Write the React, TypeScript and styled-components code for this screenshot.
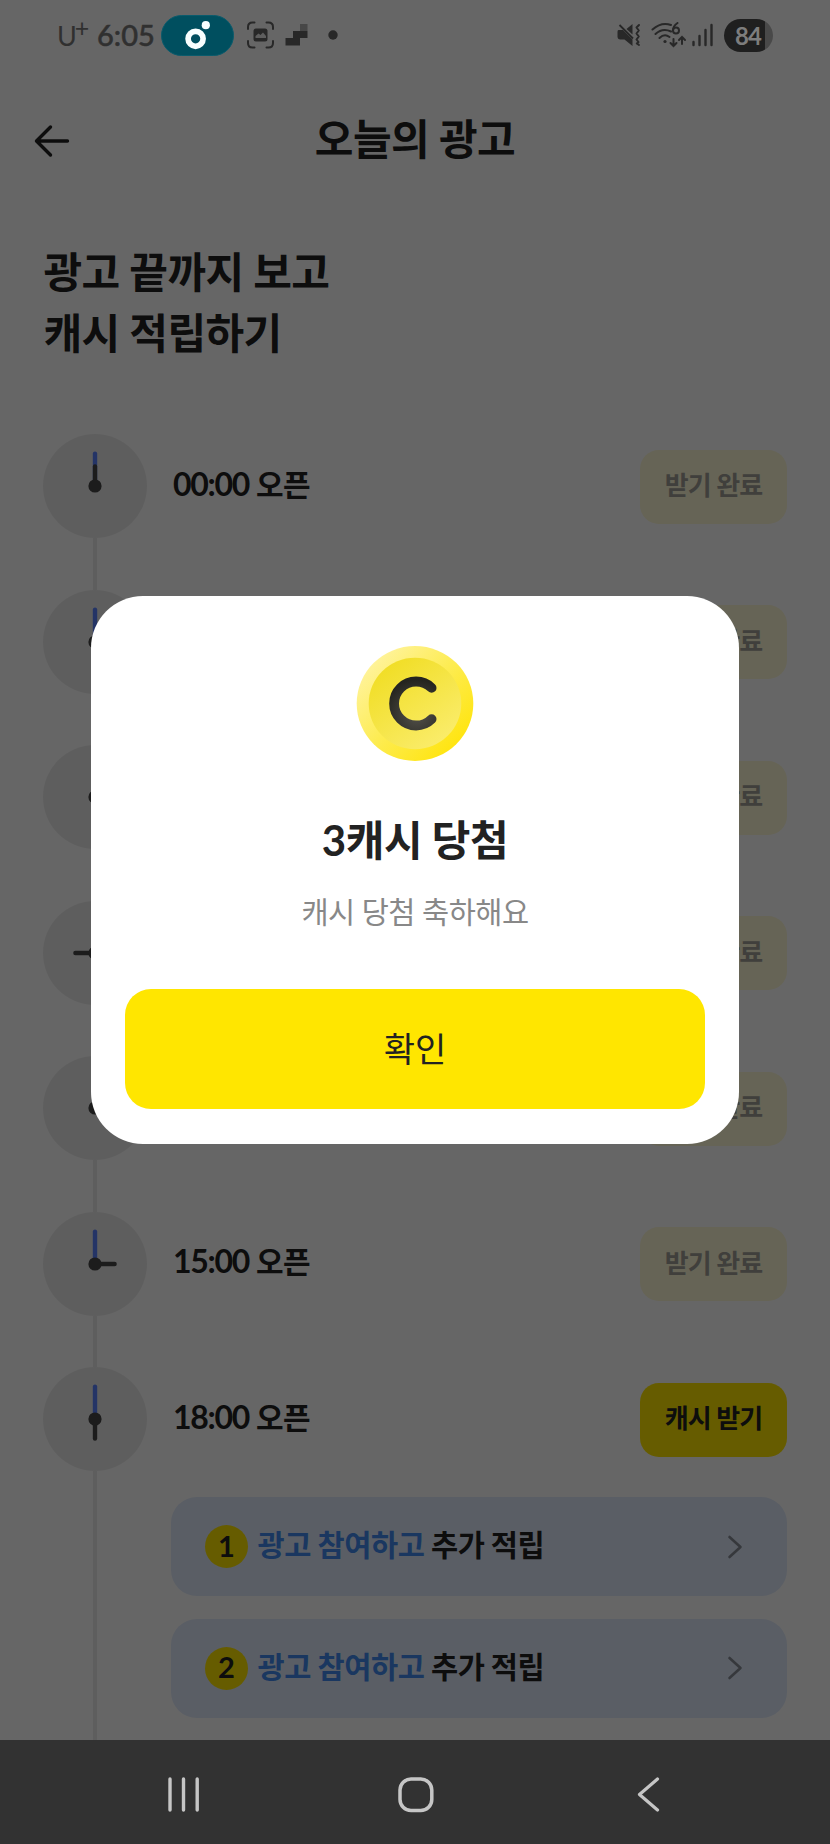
import React from "react";
import styled, { createGlobalStyle } from "styled-components";

const GlobalStyle = createGlobalStyle`
  * { box-sizing: border-box; }
  body { margin: 0; background: #666; }
  button { border: 0; margin: 0; padding: 0; font: inherit; }
`;

const Screen = styled.div`
  position: relative;
  display: flex;
  flex-direction: column;
  width: 830px;
  height: 1844px;
  overflow: hidden;
  background: #fff;
  color: #222;
  font-family: Lato, "Noto Sans CJK KR", sans-serif;
`;

/* ---------- system status bar ---------- */

const StatusBar = styled.div`
  position: relative;
  z-index: 2;
  flex: none;
  display: flex;
  align-items: center;
  justify-content: space-between;
  height: 70px;
  padding: 0 57px;
  color: #303030;
`;

const StatusGroup = styled.div`
  display: flex;
  align-items: center;
`;

const Carrier = styled.span`
  display: flex;
  align-items: flex-start;
  width: 40px;
  padding-top: 2px;
  font: 400 27px/30px Lato, sans-serif;
  sup {
    font-size: 25px;
    line-height: 12px;
    margin-left: -2px;
  }
`;

const Clock = styled.span`
  width: 64px;
  font: 500 29px/30px Lato, sans-serif;
  -webkit-text-stroke: 0.5px #303030;
`;

const NowPill = styled.span`
  display: flex;
  align-items: center;
  justify-content: center;
  width: 73px;
  height: 41px;
  border: 1px solid #0a5b6c;
  border-radius: 21px;
  background: #004f5f;
`;

const StatusIcon = styled.svg<{ $gap: number }>`
  display: block;
  margin-left: ${(p) => p.$gap}px;
`;

const Battery = styled.span`
  display: flex;
  align-items: center;
  justify-content: center;
  width: 49px;
  height: 33px;
  margin-left: 10px;
  padding-right: 1px;
  border-radius: 17px;
  background: linear-gradient(90deg, #1f1f1f 41px, #494949 41px);
  color: #7d7d7d;
  font: 700 24px/33px Lato, sans-serif;
  letter-spacing: -1px;
`;

/* ---------- page ---------- */

const Page = styled.main`
  flex: 1;
  min-height: 0;
  overflow: hidden;
`;

const Header = styled.header`
  display: grid;
  grid-template-columns: 88px 1fr 88px;
  align-items: center;
  height: 141px;
`;

const BackButton = styled.button`
  display: flex;
  align-items: center;
  height: 60px;
  padding-left: 34px;
  background: none;
`;

const HeaderTitle = styled.h1`
  margin: 0 0 3px;
  text-align: center;
  font-size: 42px;
  line-height: 60px;
  font-weight: 700;
  letter-spacing: -0.5px;
`;

const Heading = styled.h2`
  margin: 31px 0 0 43.5px;
  font-size: 42px;
  line-height: 60.5px;
  font-weight: 700;
  letter-spacing: -0.55px;
`;

const Timeline = styled.ol`
  list-style: none;
  margin: 71px 0 0;
  padding: 0 43px;
`;

const Slot = styled.li<{ $last?: boolean }>`
  display: grid;
  grid-template-columns: 104px 1fr;
  height: ${(p) => (p.$last ? "500px" : "155.5px")};
`;

const Rail = styled.div`
  display: flex;
  flex-direction: column;
  align-items: center;
`;

const Connector = styled.span`
  flex: 1;
  width: 4.5px;
  background: #ececec;
`;

const SlotBody = styled.div`
  min-width: 0;
`;

const SlotRow = styled.div`
  display: flex;
  align-items: center;
  justify-content: space-between;
  height: 104px;
  padding-left: 26px;
`;

const OpenTime = styled.span`
  margin-bottom: 5px;
  font-size: 30px;
  line-height: 40px;
  font-weight: 700;
  letter-spacing: -0.4px;
`;

const Digits = styled.span`
  font-size: 32px;
  letter-spacing: -1.3px;
`;

const ClaimButton = styled.button<{ $done: boolean }>`
  width: 147px;
  height: 74px;
  margin-top: 1px;
  padding-bottom: 3px;
  border-radius: 19px;
  background: ${(p) => (p.$done ? "#fffad6" : "#ffe600")};
  color: ${(p) => (p.$done ? "#a09f97" : "#222")};
  font-size: 26px;
  line-height: 40px;
  font-weight: 700;
  letter-spacing: -0.9px;
`;

const BonusList = styled.div`
  display: flex;
  flex-direction: column;
  gap: 23px;
  padding: 26.3px 0 0 23.5px;
`;

const BonusCard = styled.div`
  display: flex;
  align-items: center;
  height: 98.7px;
  padding: 0 44px 0 34.5px;
  border-radius: 26px;
  background: #e1ebfc;
  font-size: 29.5px;
  line-height: 40px;
  font-weight: 700;
`;

const BonusNumber = styled.span`
  display: flex;
  align-items: center;
  justify-content: center;
  width: 43px;
  height: 43px;
  margin-right: 9.5px;
  padding-bottom: 2px;
  border-radius: 50%;
  background: #ffe600;
  font-size: 29px;
`;

const BonusText = styled.span`
  flex: 1;
  letter-spacing: -0.35px;
  word-spacing: -0.5px;
  padding-bottom: 3px;
  em {
    font-style: normal;
    color: #428bef;
  }
`;

/* ---------- dialog ---------- */

const Scrim = styled.div`
  position: absolute;
  inset: 0 0 104px;
  z-index: 1;
  display: flex;
  align-items: center;
  justify-content: center;
  background: rgba(0, 0, 0, 0.6);
`;

const Dialog = styled.section`
  display: flex;
  flex-direction: column;
  align-items: center;
  width: 648.5px;
  height: 548.5px;
  padding: 49.5px 34px 35px;
  border-radius: 52px;
  background: #fff;
`;

const DialogTitle = styled.h3`
  margin: 48px 0 0;
  font-size: 42px;
  line-height: 60px;
  font-weight: 700;
  letter-spacing: -0.45px;
`;

const DialogText = styled.p`
  margin: 22px 0 0;
  color: #888;
  font-size: 29.5px;
  line-height: 40px;
  letter-spacing: -0.5px;
`;

const ConfirmButton = styled.button`
  align-self: stretch;
  height: 120px;
  margin-top: auto;
  padding-bottom: 1px;
  border-radius: 26px;
  background: #ffe600;
  color: #222;
  font-size: 34px;
  line-height: 50px;
`;

/* ---------- system navigation ---------- */

const NavBar = styled.nav`
  position: relative;
  z-index: 2;
  flex: none;
  display: grid;
  grid-template-columns: 1fr 40px 1fr;
  align-items: center;
  height: 104px;
  padding-top: 3px;
  background: #323232;
  svg { display: block; }
`;

const NavSide = styled.div<{ $align: "start" | "end" }>`
  display: flex;
  justify-content: ${(p) => p.$align};
  padding: 0 166px;
`;

/* ---------- drawings ---------- */

function ClockFace({ hour }: { hour: number }) {
  return (
    <svg width="104" height="104" viewBox="-52 -52 104 104" strokeWidth="4.4" strokeLinecap="round">
      <circle r="52" fill="#ececec" />
      <path d="M0 0V-32.4" stroke="#5a82ff" />
      <path d="M0 0V-19.6" stroke="#464646" transform={`rotate(${hour * 30})`} />
      <circle r="6.6" fill="#464646" />
    </svg>
  );
}

function Coin() {
  return (
    <svg width="118" height="117" viewBox="-59 -58.5 118 117">
      <defs>
        <linearGradient id="rim" x1="0.12" y1="0.15" x2="0.85" y2="0.85">
          <stop offset="0" stopColor="#fff39a" />
          <stop offset="0.5" stopColor="#fdec52" />
          <stop offset="1" stopColor="#ffe512" />
        </linearGradient>
        <linearGradient id="face" x1="0.2" y1="0.1" x2="0.8" y2="0.9">
          <stop offset="0" stopColor="#f1de27" />
          <stop offset="1" stopColor="#faec69" />
        </linearGradient>
        <radialGradient id="mark" gradientUnits="userSpaceOnUse" cx="2" cy="10" r="34">
          <stop offset="0" stopColor="#55534c" />
          <stop offset="1" stopColor="#24241f" />
        </radialGradient>
      </defs>
      <ellipse rx="58.3" ry="57.5" fill="url(#rim)" />
      <ellipse rx="46.3" ry="45.7" fill="url(#face)" />
      <path d="M16.600 -15.600A22 22 0 1 0 16.600 15.600" fill="none" stroke="url(#mark)" strokeWidth="9.8" strokeLinecap="round" />
    </svg>
  );
}

const INK = "#282828";

function StatusLeft() {
  return (
    <StatusGroup>
      <Carrier>U<sup>+</sup></Carrier>
      <Clock>6:05</Clock>
      <NowPill>
        <svg width="30" height="30" viewBox="0 0 30 30">
          <circle cx="12.6" cy="18.8" r="7.5" fill="none" stroke="#f8ffff" strokeWidth="5.7" />
          <circle cx="22.8" cy="5.2" r="4.1" fill="#f8ffff" />
        </svg>
      </NowPill>
      <StatusIcon $gap={12.5} width="27" height="28" viewBox="0 0 27 28" fill="none" stroke={INK} strokeWidth="2">
        <path d="M1 8V6Q1 1.5 5.500 1.500H7.500M19.500 1.500H21.500Q26 1.500 26 6V8M26 20V22Q26 26.500 21.500 26.500H19.500M7.500 26.500H5.500Q1 26.500 1 22V20" strokeLinecap="round" />
        <rect x="6.500" y="7.500" width="14" height="13" rx="2.500" fill={INK} stroke="none" />
        <path d="M8.500 17V15L11.500 12.500L13.500 14L16 11.500L19 15V17Z" fill="#5e5e5e" stroke="none" />
      </StatusIcon>
      <StatusIcon $gap={11} width="23" height="22" viewBox="0 0 23 22">
        <path d="M8 7H22.500V14H15V21.500H0.500V14H8Z" fill={INK} />
        <path d="M15 0H22.500V7H15Z" fill="#474747" />
      </StatusIcon>
      <StatusIcon $gap={20.5} width="10" height="10" viewBox="0 0 10 10">
        <circle cx="5" cy="5" r="4.700" fill={INK} />
      </StatusIcon>
    </StatusGroup>
  );
}

function StatusRight() {
  return (
    <StatusGroup>
      <StatusIcon $gap={0} width="24" height="24" viewBox="0 0 24 24" fill="none" stroke={INK}>
        <path d="M1.500 7H6L15.500 16.500V23L7.500 16.500H3.500Q0.500 16.500 0.500 13.500V9Q0.500 7 1.500 7Z" fill={INK} stroke="none" />
        <path d="M15.500 1V11.500L9.500 6Z" fill={INK} stroke="none" />
        <path d="M2.500 2L16 15.500" strokeWidth="1.800" />
        <path d="M22 2L19.500 4.500L21.800 7.500L19.500 10.500L21.800 13.500L19.500 16.500L21.500 19L19.800 20.500L22 22" strokeWidth="2" strokeLinecap="round" strokeLinejoin="round" />
      </StatusIcon>
      <StatusIcon $gap={9.5} width="36" height="26" viewBox="0 0 36 26" fill="none" stroke={INK} strokeWidth="2" strokeLinecap="round">
        <path d="M1.500 7.500Q10.500 -0.500 20 3M4.500 12Q11.500 5.500 20 9.500M8.500 16Q13.500 11 18.500 15" />
        <circle cx="14" cy="19.500" r="1.600" fill={INK} stroke="none" />
        <path d="M26.500 1Q22 4 22 8.500" />
        <circle cx="25" cy="8.500" r="3" />
        <path d="M22.500 17V24M19.500 21L22.500 24L25.500 21M31 22V15M28 18L31 15L34 18" />
      </StatusIcon>
      <StatusIcon $gap={4.5} width="23" height="24" viewBox="0 0 23 24" stroke={INK} strokeWidth="2.400" strokeLinecap="round">
        <path d="M2.500 19V22M8.500 13V22M14.500 7V22M20.500 2V22" />
      </StatusIcon>
      <Battery>84</Battery>
    </StatusGroup>
  );
}

const slots = [0, 3, 6, 9, 12, 15, 18];
const bonuses = [1, 2];

export default function App() {
  return (
    <Screen>
      <GlobalStyle />
      <StatusBar>
        <StatusLeft />
        <StatusRight />
      </StatusBar>

      <Page>
        <Header>
          <BackButton aria-label="뒤로">
            <svg width="36" height="34" viewBox="0 0 36 34" fill="none" stroke="#222" strokeWidth="3.4" strokeLinecap="round" strokeLinejoin="round">
              <path d="M33.500 17H3M16.500 3L2.500 17L16.500 31" />
            </svg>
          </BackButton>
          <HeaderTitle>오늘의 광고</HeaderTitle>
        </Header>

        <Heading>
          광고 끝까지 보고
          <br />
          캐시 적립하기
        </Heading>

        <Timeline>
          {slots.map((hour) => {
            const current = hour === 18;
            return (
              <Slot key={hour} $last={current}>
                <Rail>
                  <ClockFace hour={hour} />
                  <Connector />
                </Rail>
                <SlotBody>
                  <SlotRow>
                    <OpenTime>
                      <Digits>{String(hour).padStart(2, "0")}:00</Digits> 오픈
                    </OpenTime>
                    <ClaimButton $done={!current}>{current ? "캐시 받기" : "받기 완료"}</ClaimButton>
                  </SlotRow>
                  {current && (
                    <BonusList>
                      {bonuses.map((n) => (
                        <BonusCard key={n}>
                          <BonusNumber>{n}</BonusNumber>
                          <BonusText>
                            <em>광고 참여하고</em> 추가 적립
                          </BonusText>
                          <svg width="16" height="26" viewBox="0 0 16 26" fill="none" stroke="#878d96" strokeWidth="2.6" strokeLinecap="round" strokeLinejoin="round">
                            <path d="M2.500 3L13.500 13L2.500 23" />
                          </svg>
                        </BonusCard>
                      ))}
                    </BonusList>
                  )}
                </SlotBody>
              </Slot>
            );
          })}
        </Timeline>
      </Page>

      <Scrim>
        <Dialog role="dialog">
          <Coin />
          <DialogTitle>3캐시 당첨</DialogTitle>
          <DialogText>캐시 당첨 축하해요</DialogText>
          <ConfirmButton>확인</ConfirmButton>
        </Dialog>
      </Scrim>

      <NavBar>
        <NavSide $align="start">
          <svg width="36" height="38" viewBox="0 0 36 38" stroke="#c6c6c6" strokeWidth="3.4" strokeLinecap="round">
            <path d="M4 4V35M17.500 4V35M31.200 4V35" />
          </svg>
        </NavSide>
        <svg width="40" height="38" viewBox="0 0 40 38" fill="none" stroke="#c6c6c6" strokeWidth="3.500">
          <rect x="5" y="4" width="31.800" height="31.500" rx="11" />
        </svg>
        <NavSide $align="end">
          <svg width="30" height="38" viewBox="0 0 30 38" fill="none" stroke="#c6c6c6" strokeWidth="3.200" strokeLinecap="round" strokeLinejoin="round">
            <path d="M23.500 4L5.500 19.500L23.500 35" />
          </svg>
        </NavSide>
      </NavBar>
    </Screen>
  );
}
